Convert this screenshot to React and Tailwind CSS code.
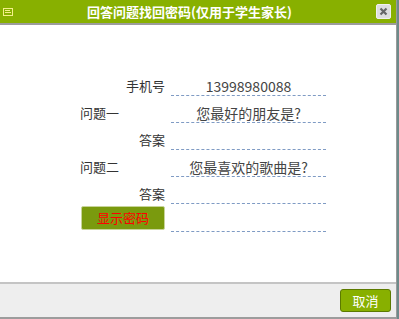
import React from 'react'

const font = { fontFamily: '"Microsoft YaHei", "Noto Sans CJK SC", "Noto Sans", sans-serif' }

const Row = ({ label, left, value, children }) => (
    <div className="flex h-[27px]">
        <div className={'w-[88px] pr-[3px] pt-[9px] leading-[16px] ' + (left ? 'text-left' : 'text-right')}>
            {children || label}
        </div>
        <div className="w-[155px] ml-[3px] border-b border-dashed border-[#7f9bc4] text-center pt-[9px] leading-[16px] text-[14px] text-[#444]">
            {value}
        </div>
    </div>
)

const App = () => {
    return (
        <div className="w-[399px] h-[319px] flex bg-[#6d8a8a]" style={font}>
            <div className="w-[397px] h-[319px] flex flex-col bg-white border-r border-[#9a9a9a]">
                <div className="h-[25px] bg-[#88b000] border-b-2 border-[#9c9c9c] flex items-center relative">
                    <div className="ml-[3px] w-[10px] h-[8px] border border-[#f4f08a] flex flex-col justify-center gap-[1px] px-[1px]">
                        <div className="h-px w-[5px] bg-[#f4f08a]" />
                        <div className="h-px w-full bg-[#f4f08a]" />
                    </div>
                    <div className="flex-1 text-center text-white font-bold text-[13px] leading-[23px] -ml-[10px]">
                        回答问题找回密码(仅用于学生家长)
                    </div>
                    <div className="mr-[5px] w-[15px] h-[15px] bg-[#dedede] border border-[#f0f0f0] rounded-[2px] flex items-center justify-center">
                        <svg width="9" height="9" viewBox="0 0 9 9">
                            <path d="M1.5 1.5 L7.5 7.5 M7.5 1.5 L1.5 7.5" stroke="#666" strokeWidth="2.2" />
                        </svg>
                    </div>
                </div>
                <div className="flex-1 pt-[44px] pl-[80px] text-[13px] text-[#333]">
                    <Row label="手机号" value="13998980088" />
                    <Row label="问题一" left value="您最好的朋友是?" />
                    <Row label="答案" value="" />
                    <Row label="问题二" left value="您最喜欢的歌曲是?" />
                    <Row label="答案" value="" />
                    <div className="flex h-[28px]">
                        <div className="w-[88px] pt-[2px]">
                            <button className="w-[84px] h-[24px] ml-[1px] bg-[#7a9a0e] border border-[#c8d49a] rounded-[2px] text-[#ff0000] text-[13px] leading-[20px]">
                                显示密码
                            </button>
                        </div>
                        <div className="w-[155px] ml-[3px] border-b border-dashed border-[#7f9bc4]" />
                    </div>
                </div>
                <div className="h-[37px] bg-[#eeeeee] border-t-2 border-[#c4c4c4] border-b-2 border-b-[#9c9c9c] flex items-center justify-end pr-[5px]">
                    <button className="w-[51px] h-[23px] bg-[#88b000] border border-[#5c7a00] rounded-[3px] text-white text-[13px] leading-[20px]">
                        取消
                    </button>
                </div>
            </div>
        </div>
    )
}

export default App
